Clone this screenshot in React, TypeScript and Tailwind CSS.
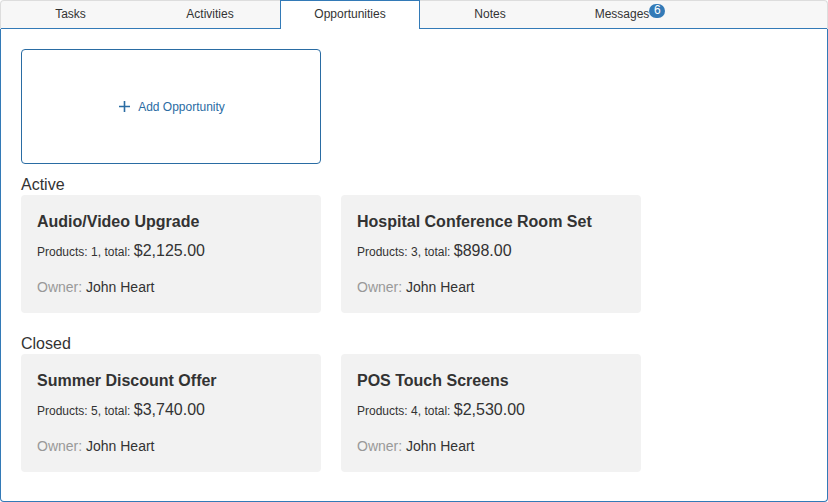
import { useState } from "react";

type Opportunity = { name: string; products: number; total: string; owner: string };

const tabs: { label: string; badge?: number }[] = [
  { label: "Tasks" },
  { label: "Activities" },
  { label: "Opportunities" },
  { label: "Notes" },
  { label: "Messages", badge: 6 },
];

const groups: { title: string; items: Opportunity[] }[] = [
  {
    title: "Active",
    items: [
      { name: "Audio/Video Upgrade", products: 1, total: "$2,125.00", owner: "John Heart" },
      { name: "Hospital Conference Room Set", products: 3, total: "$898.00", owner: "John Heart" },
    ],
  },
  {
    title: "Closed",
    items: [
      { name: "Summer Discount Offer", products: 5, total: "$3,740.00", owner: "John Heart" },
      { name: "POS Touch Screens", products: 4, total: "$2,530.00", owner: "John Heart" },
    ],
  },
];

function OpportunityCard({ item }: { item: Opportunity }) {
  return (
    <article className="w-[300px] rounded bg-[#f2f2f2] p-4">
      <h3 className="text-base leading-[22px] font-bold">{item.name}</h3>
      <p className="mt-2 text-xs leading-[22px]">
        Products: {item.products}, total: <span className="text-base leading-none">{item.total}</span>
      </p>
      <p className="mt-3.5 text-sm leading-5">
        <span className="text-[#999999]">Owner:</span> {item.owner}
      </p>
    </article>
  );
}

export default function App() {
  const [active, setActive] = useState("Opportunities");

  return (
    <div className="flex min-h-screen flex-col bg-white font-['Liberation_Sans',Arial,sans-serif] text-[#333333]">
      <div
        role="tablist"
        className="flex rounded-t border border-b-0 border-[#dddddd] bg-[#f7f7f7] shadow-[inset_0_-1px_0_#337ab7]"
      >
        {tabs.map((tab) => (
          <button
            key={tab.label}
            role="tab"
            type="button"
            id={"tab-" + tab.label}
            aria-selected={tab.label === active}
            aria-controls="tab-panel"
            onClick={() => setActive(tab.label)}
            className={
              tab.label === active
                ? "-mt-px flex h-[29px] w-[140px] items-center justify-center border border-b-0 border-[#337ab7] bg-white pb-0.5 text-xs leading-4 first:w-[139px]"
                : "flex h-7 w-[140px] items-center justify-center pb-0.5 text-xs leading-4 first:w-[139px]"
            }
          >
            {tab.label}
            {tab.badge !== undefined && (
              <span className="mb-1.5 h-3.5 min-w-4 rounded-full bg-[#337ab7] px-1 text-xs leading-3 text-white">
                {tab.badge}
              </span>
            )}
          </button>
        ))}
      </div>

      <main
        id="tab-panel"
        role="tabpanel"
        aria-labelledby={"tab-" + active}
        className="flex-1 rounded-b border border-t-0 border-[#337ab7] px-5 pt-5 pb-7"
      >
        <button
          type="button"
          className="flex h-[115px] w-[300px] items-center justify-center gap-2 rounded border border-[#2a6ca3] text-xs text-[#2a6ca3]"
        >
          <svg width="13" height="13" viewBox="0 0 13 13" fill="currentColor" aria-hidden="true">
            <path d="M6.7 1h1.6v4.7H13v1.6H8.3V12H6.7V7.3H2V5.7h4.7z" />
          </svg>
          Add Opportunity
        </button>

        <div className="mt-2.5 flex flex-col gap-5">
          {groups.map((group) => (
            <section key={group.title}>
              <h2 className="text-base leading-[21px]">{group.title}</h2>
              <div className="flex flex-wrap gap-5">
                {group.items.map((item) => (
                  <OpportunityCard key={item.name} item={item} />
                ))}
              </div>
            </section>
          ))}
        </div>
      </main>
    </div>
  );
}
